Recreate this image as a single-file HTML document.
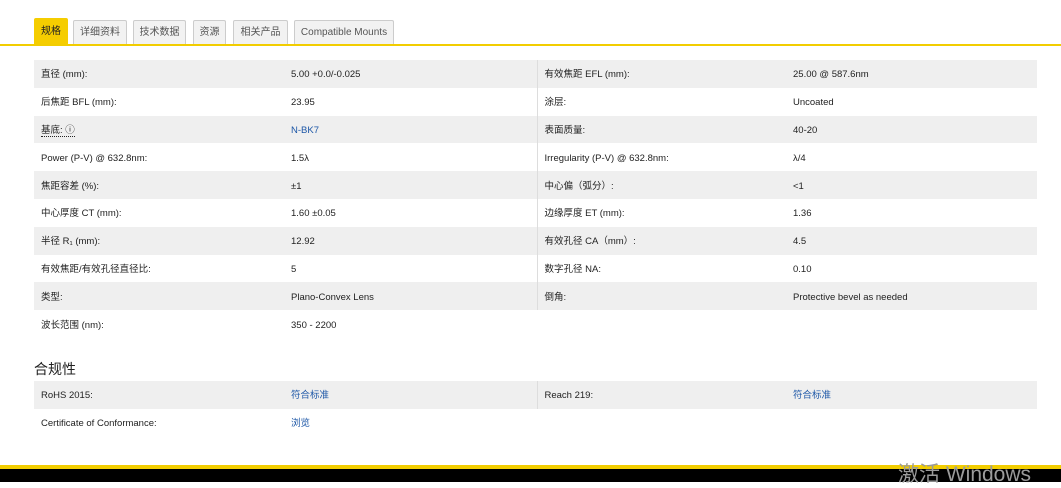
<!DOCTYPE html>
<html><head><meta charset="utf-8"><style>
*{margin:0;padding:0;box-sizing:border-box}
body{width:1061px;height:482px;background:#fff;font-family:"Liberation Sans","Noto Sans CJK SC",sans-serif;color:#222;position:relative;overflow:hidden}
.tabs{position:absolute;left:0;top:0;width:1061px;height:46px;border-bottom:2px solid #f2cd00}
.tab{position:absolute;top:20px;height:24px;border:1px solid #ccc;border-bottom:none;background:#f2f2f2;font-size:10px;color:#555;line-height:23px;text-align:center;border-radius:2px 2px 0 0}
.tab.a{background:#f5cd00;border-color:#f5cd00;color:#222;top:18px;height:26px;line-height:26px}
table{position:absolute;left:34px;width:1003px;border-collapse:collapse;font-size:9.5px}
td{height:27.8px;padding:3px 0 0 7px;vertical-align:middle;line-height:12px}
td span,td a{vertical-align:middle}
tr:nth-child(odd) td{background:#efefef}
td.c1{width:250px}td.c2{width:253px;border-right:1px solid #ddd}td.c3{width:249px}
a{color:#1d57a7;text-decoration:none}
h3{position:absolute;left:34px;top:359px;font-size:14px;font-weight:normal;color:#222}
.bot{position:absolute;left:0;top:465px;width:1061px;height:17px;background:#000;border-top:4px solid #f2cd00}
.wm{position:absolute;left:898px;top:458px;font-size:21px;color:#9a9a9a;font-family:"Liberation Sans","Noto Sans CJK SC",sans-serif}
</style></head><body>
<div class="tabs">
<div class="tab a" style="left:34px;width:34px">规格</div>
<div class="tab" style="left:73px;width:54px">详细资料</div>
<div class="tab" style="left:133px;width:53px">技术数据</div>
<div class="tab" style="left:193px;width:33px">资源</div>
<div class="tab" style="left:233px;width:55px">相关产品</div>
<div class="tab" style="left:294px;width:100px">Compatible Mounts</div>
</div>
<table style="top:60px">
<tr><td class="c1">直径 (mm):</td><td class="c2">5.00 +0.0/-0.025</td><td class="c3">有效焦距 EFL (mm):</td><td>25.00 @ 587.6nm</td></tr>
<tr><td class="c1">后焦距 BFL (mm):</td><td class="c2">23.95</td><td class="c3">涂层:</td><td>Uncoated</td></tr>
<tr><td class="c1"><span style="border-bottom:1px dotted #222">基底: ⓘ</span></td><td class="c2"><a>N-BK7</a></td><td class="c3">表面质量:</td><td>40-20</td></tr>
<tr><td class="c1">Power (P-V) @ 632.8nm:</td><td class="c2">1.5λ</td><td class="c3">Irregularity (P-V) @ 632.8nm:</td><td>λ/4</td></tr>
<tr><td class="c1">焦距容差 (%):</td><td class="c2">±1</td><td class="c3">中心偏（弧分）:</td><td>&lt;1</td></tr>
<tr><td class="c1">中心厚度 CT (mm):</td><td class="c2">1.60 ±0.05</td><td class="c3">边缘厚度 ET (mm):</td><td>1.36</td></tr>
<tr><td class="c1">半径 R₁ (mm):</td><td class="c2">12.92</td><td class="c3">有效孔径 CA（mm）:</td><td>4.5</td></tr>
<tr><td class="c1">有效焦距/有效孔径直径比:</td><td class="c2">5</td><td class="c3">数字孔径 NA:</td><td>0.10</td></tr>
<tr><td class="c1">类型:</td><td class="c2">Plano-Convex Lens</td><td class="c3">倒角:</td><td>Protective bevel as needed</td></tr>
<tr><td class="c1">波长范围 (nm):</td><td class="c2" style="border-right:none">350 - 2200</td><td class="c3"></td><td></td></tr>
</table>
<h3>合规性</h3>
<table style="top:381px">
<tr><td class="c1">RoHS 2015:</td><td class="c2"><a>符合标准</a></td><td class="c3">Reach 219:</td><td><a>符合标准</a></td></tr>
<tr><td class="c1">Certificate of Conformance:</td><td class="c2" style="border-right:none"><a>浏览</a></td><td class="c3"></td><td></td></tr>
</table>
<div class="bot"></div>
<div class="wm">激活 Windows</div>
</body></html>
